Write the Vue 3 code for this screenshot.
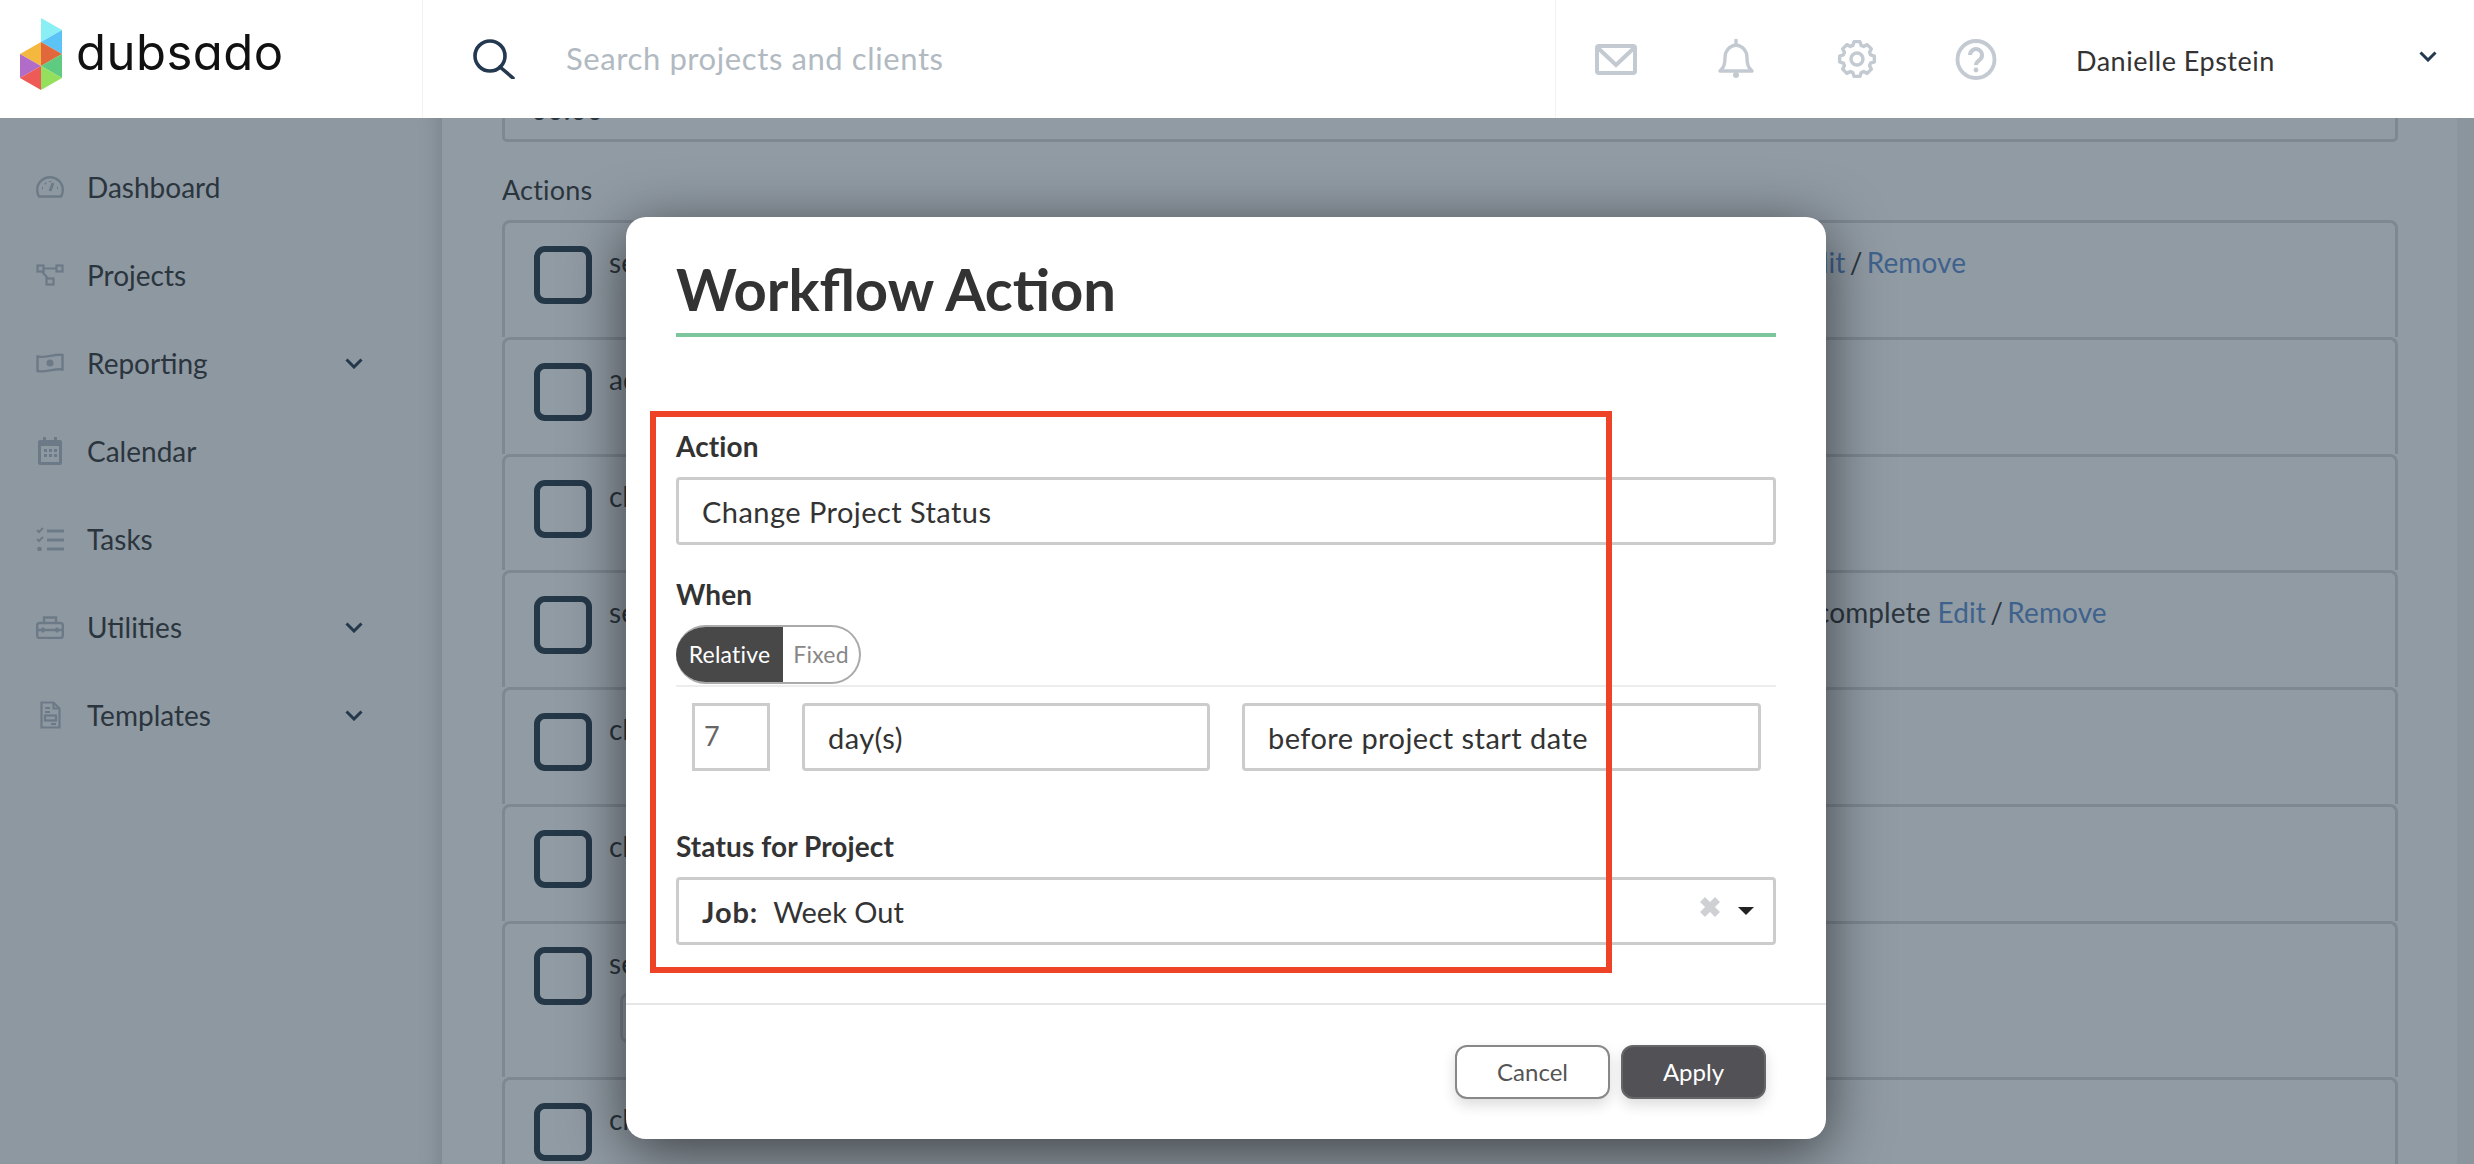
<script setup>
const nav = [
  { label: 'Dashboard', icon: 'gauge' },
  { label: 'Projects', icon: 'nodes' },
  { label: 'Reporting', icon: 'money', more: true },
  { label: 'Calendar', icon: 'cal' },
  { label: 'Tasks', icon: 'tasks' },
  { label: 'Utilities', icon: 'tool', more: true },
  { label: 'Templates', icon: 'doc', more: true }
]
const rows = [
  { text: 'send email', kind: 'links-a' },
  { text: 'add tag' },
  { text: 'change status' },
  { text: 'send task', kind: 'links-b', tail: 'complete' },
  { text: 'change status' },
  { text: 'change status' },
  { text: 'send form', tall: true },
  { text: 'change status' }
]
function gearPath() {
  const teeth = 8, cx = 20, cy = 20
  let d = ''
  for (let i = 0; i < teeth; i++) {
    const a = (i / teeth) * Math.PI * 2
    const pts = [[14.2, -0.3], [17.6, -0.17], [17.6, 0.17], [14.2, 0.3]]
    for (const [r, o] of pts) {
      const x = cx + r * Math.cos(a + o)
      const y = cy + r * Math.sin(a + o)
      d += (d ? 'L' : 'M') + x.toFixed(2) + ' ' + y.toFixed(2)
    }
  }
  return d + 'Z'
}
const gear = gearPath()
</script>

<template>
  <div class="app">
    <header class="top">
      <div class="brand">
        <svg class="logo" width="44" height="74" viewBox="20 17 44 74">
          <polygon points="41,18 62,30 41,42" fill="#8aeff4" />
          <polygon points="62,30 62,54 41,42" fill="#5cc3f7" />
          <polygon points="20,54 41,42 41,66" fill="#f5b83f" />
          <polygon points="41,42 62,54 41,66" fill="#e0683a" />
          <polygon points="20,54 41,66 20,78" fill="#b06cc6" />
          <polygon points="62,54 62,78 41,66" fill="#5fcb80" />
          <polygon points="20,78 41,66 41,90" fill="#ee5a55" />
          <polygon points="41,66 62,78 41,90" fill="#94df5b" />
        </svg>
        <span class="wordmark">dubsado</span>
      </div>
      <div class="search">
        <svg width="42" height="40" viewBox="0 0 42 40" fill="none" stroke="#24384f" stroke-width="3.6">
          <circle cx="17" cy="17" r="15" />
          <path d="M27 28l13 11" stroke-linecap="round" />
        </svg>
        <span class="placeholder">Search projects and clients</span>
      </div>
      <div class="tools">
        <svg class="tool mail" width="42" height="31" viewBox="0 0 42 31" fill="none" stroke="#c3cad1" stroke-width="4">
          <rect x="2" y="2" width="38" height="27" rx="2" />
          <path d="M3 4l18 17L39 4" />
        </svg>
        <svg class="tool bell" width="38" height="40" viewBox="0 0 38 40" fill="none" stroke="#c3cad1" stroke-width="3.4">
          <path d="M3 32c3-3 5-5 5-13 0-7 4-12 11-13 7 1 11 6 11 13 0 8 2 10 5 13z" stroke-linejoin="round" />
          <path d="M19 1v5" stroke-linecap="round" />
          <circle cx="19" cy="36" r="3" fill="#c3cad1" stroke="none" />
        </svg>
        <svg class="tool gear" width="40" height="40" viewBox="0 0 40 40" fill="none" stroke="#c3cad1" stroke-width="3.4">
          <path :d="gear" stroke-linejoin="round" />
          <circle cx="20" cy="20" r="6" />
        </svg>
        <svg class="tool help" width="42" height="41" viewBox="0 0 42 41" fill="none" stroke="#c3cad1" stroke-width="3.8">
          <circle cx="21" cy="20.5" r="18.5" />
          <path d="M15 16a6 6 0 1 1 9.5 5c-2 1.4-3.5 2.4-3.5 5" stroke-width="4" />
          <circle cx="21" cy="31" r="2.4" fill="#c3cad1" stroke="none" />
        </svg>
        <span class="user">Danielle Epstein</span>
        <svg class="caret" width="18" height="11" viewBox="0 0 18 11" fill="none" stroke="#24384f" stroke-width="3">
          <path d="M1.5 1.5L9 9l7.5-7.5" />
        </svg>
      </div>
    </header>

    <div class="page">
      <aside class="side">
        <div v-for="item in nav" :key="item.label" class="nav-item">
          <span class="nav-icon">
            <svg v-if="item.icon === 'gauge'" width="28" height="22" viewBox="0 0 28 22" fill="none" stroke="#b5bdc5" stroke-width="2.4">
              <path d="M3 20.5C1.6 18.5 1.2 16 1.2 14a12.8 12.8 0 0 1 25.6 0c0 2-.4 4.500-1.800 6.500z" />
              <path d="M14 15l3-8" stroke-width="3" />
              <path d="M6 12h1M9 7l1 1M14 5v1M21 12h1" />
            </svg>
            <svg v-else-if="item.icon === 'nodes'" width="28" height="22" viewBox="0 0 28 22" fill="none" stroke="#b5bdc5" stroke-width="2.2">
              <rect x="1.500" y="1.500" width="6" height="6" />
              <rect x="20.500" y="1.500" width="6" height="6" />
              <rect x="10.500" y="14.500" width="7" height="6" />
              <path d="M7.500 4.500h13M6 7.500l6 7" />
            </svg>
            <svg v-else-if="item.icon === 'money'" width="28" height="20" viewBox="0 0 28 20" fill="none" stroke="#b5bdc5" stroke-width="2.4">
              <path d="M1.500 3.500c8 2 17-3 25-1.500v14.500c-8-1.500-17 3.500-25 1.500z" />
              <circle cx="14" cy="10" r="3.600" fill="#b5bdc5" stroke="none" />
            </svg>
            <svg v-else-if="item.icon === 'cal'" width="24" height="28" viewBox="0 0 24 28" fill="#b5bdc5">
              <path d="M5 0h3v3h8V0h3v3h3a2 2 0 0 1 2 2v21a2 2 0 0 1-2 2H2a2 2 0 0 1-2-2V5a2 2 0 0 1 2-2h3zM3 9v16h18V9z" />
              <rect x="6" y="12" width="3" height="3" /><rect x="11" y="12" width="3" height="3" /><rect x="16" y="12" width="3" height="3" />
              <rect x="6" y="17" width="3" height="3" /><rect x="11" y="17" width="3" height="3" /><rect x="16" y="17" width="3" height="3" />
            </svg>
            <svg v-else-if="item.icon === 'tasks'" width="28" height="24" viewBox="0 0 28 24" fill="none" stroke="#b5bdc5" stroke-width="3">
              <path d="M11 4h17M11 13h17M11 22h17" />
              <path d="M1 3l2 2 4-4M1 12l2 2 4-4" stroke-width="2" />
              <circle cx="3.500" cy="22" r="2.300" fill="#b5bdc5" stroke="none" />
            </svg>
            <svg v-else-if="item.icon === 'tool'" width="28" height="24" viewBox="0 0 28 24" fill="none" stroke="#b5bdc5" stroke-width="2.4">
              <rect x="1.200" y="8" width="25.600" height="15" rx="2.500" />
              <path d="M8 8V2.500h12V8M1.200 15h25.600" />
              <path d="M7 12.500v5M21 12.500v5" stroke-width="3" />
            </svg>
            <svg v-else width="21" height="28" viewBox="0 0 21 28" fill="none" stroke="#b5bdc5" stroke-width="2.200">
              <path d="M1.500 1.500h12l6 6v19h-18z" />
              <path d="M13.500 1.500v6h6M5 7h5M5 11h5" />
              <rect x="5" y="14.500" width="11" height="5" />
              <path d="M11 23h5" />
            </svg>
          </span>
          <span class="nav-label">{{ item.label }}</span>
          <svg v-if="item.more" class="nav-more" width="18" height="11" viewBox="0 0 18 11" fill="none" stroke="#24384f" stroke-width="3">
            <path d="M1.500 1.500L9 9l7.500-7.500" />
          </svg>
        </div>
      </aside>

      <main class="main">
        <div class="time-box">00:00</div>
        <div class="actions-title">Actions</div>
        <div
          v-for="(row, i) in rows"
          :key="i"
          class="card"
          :class="{ tall: row.tall }"
        >
          <span class="check"></span>
          <div class="card-body">
            <div class="card-line">
              <span class="lead" :class="row.kind">{{ row.text }}</span>
              <span v-if="row.tail" class="tail">{{ row.tail }}</span>
              <span v-if="row.kind" class="links"><a>Edit</a> / <a>Remove</a></span>
            </div>
            <div v-if="row.tall" class="note"></div>
          </div>
        </div>
      </main>
      <div class="scroll-track"></div>
    </div>

    <div class="overlay"></div>

    <section class="modal">
      <h1 class="title">Workflow Action</h1>
      <div class="form">
        <label class="field-label first">Action</label>
        <div class="control">Change Project Status</div>

        <label class="field-label when">When</label>
        <div class="switch">
          <span class="on">Relative</span>
          <span class="off">Fixed</span>
        </div>
        <div class="timing">
          <div class="num">7</div>
          <div class="control">day(s)</div>
          <div class="control">before project start date</div>
        </div>

        <label class="field-label status">Status for Project</label>
        <div class="control select">
          <b>Job:</b>
          <span class="val">Week Out</span>
          <svg class="clear" width="22" height="22" viewBox="0 0 22 22" stroke="#cfd0d4" stroke-width="7">
            <path d="M3.500 3.500l15 15M18.500 3.500l-15 15" />
          </svg>
          <span class="arrow"></span>
        </div>
      </div>
      <footer class="foot">
        <button class="btn cancel">Cancel</button>
        <button class="btn apply">Apply</button>
      </footer>
      <div class="annotation"></div>
    </section>
  </div>
</template>

<style scoped>
.app {
  position: relative;
  width: 2474px;
  height: 1164px;
  overflow: hidden;
  background: #fff;
  font-family: Lato, "Noto Sans", sans-serif;
  color: #333;
}
.top {
  position: relative;
  z-index: 10;
  display: flex;
  height: 118px;
  background: #fff;
}
.brand {
  width: 423px;
  flex: none;
  display: flex;
  align-items: flex-start;
  border-right: 1px solid #f2f2f2;
  box-sizing: border-box;
  padding: 17px 0 0 20px;
}
.wordmark {
  margin: 8px 0 0 12px;
  font-family: Inter, sans-serif;
  font-feature-settings: "cv11";
  font-size: 49px;
  letter-spacing: 0.5px;
  line-height: 56px;
  color: #111;
}
.search {
  flex: 1;
  display: flex;
  align-items: center;
  padding: 0 0 0 50px;
}
.placeholder {
  margin-left: 51px;
  margin-top: -2px;
  font-size: 31px;
  letter-spacing: 0.6px;
  color: #b1b9c1;
}
.tools {
  width: 919px;
  flex: none;
  box-sizing: border-box;
  border-left: 1px solid #f2f2f2;
  display: flex;
  align-items: center;
  position: relative;
  padding-left: 39px;
}
.tool { flex: none; }
.bell { margin-left: 80px; }
.gear { margin-left: 82px; }
.help { margin-left: 78px; }
.user {
  margin-left: 79px;
  margin-top: 2px;
  font-size: 27px;
  letter-spacing: 0.5px;
  color: #333;
}
.caret { margin-left: auto; margin-right: 37px; margin-top: -6px; }

.page {
  display: flex;
  height: 1046px;
}
.side {
  width: 442px;
  flex: none;
  box-sizing: border-box;
  padding: 25px 79px 0 36px;
  background: #f8f8f8;
  box-shadow: inset -24px 0 22px -22px rgba(0, 0, 0, 0.18);
}
.nav-item {
  height: 88px;
  display: flex;
  align-items: center;
  color: #333;
}
.nav-icon {
  width: 28px;
  margin-right: 23px;
  display: flex;
  justify-content: center;
}
.nav-label { font-size: 28px; }
.nav-more { margin-left: auto; }

.main {
  flex: 1;
  min-width: 0;
  padding: 0 59px 0 60px;
  overflow: hidden;
}
.time-box {
  margin-top: -46px;
  height: 70px;
  box-sizing: border-box;
  border: 3px solid #d8d8d8;
  border-radius: 5px;
  padding: 17px 26px 0;
  font-size: 28px;
  line-height: 34px;
}
.actions-title {
  margin-top: 30px;
  height: 48px;
  font-size: 27px;
  letter-spacing: 0.2px;
  line-height: 36px;
}
.card {
  display: flex;
  box-sizing: border-box;
  height: 116.8px;
  border: 3px solid #d8d8d8;
  border-bottom-width: 0;
  border-radius: 8px 8px 0 0;
  padding: 23px 0 0 29px;
}
.card.tall { height: 156.5px; }
.check {
  width: 58px;
  height: 58px;
  flex: none;
  box-sizing: border-box;
  border: 6px solid #263847;
  border-radius: 11px;
}
.card-body {
  margin-left: 17px;
  flex: 1;
  min-width: 0;
}
.card-line {
  display: flex;
  font-size: 28px;
  letter-spacing: 0.1px;
  line-height: 32px;
  white-space: nowrap;
}
.lead { width: 1200px; }
.lead.links-a { width: 1188px; }
.lead.links-b { width: 1207px; }
.tail { margin-right: 7px; }
.links { white-space: pre; word-spacing: -3px; }
.links a { color: #5b8dcf; }
.note {
  margin: 14px 0 0 11px;
  width: 300px;
  height: 50px;
  box-sizing: border-box;
  border: 3px solid #d8d8d8;
  border-radius: 8px;
}
.scroll-track {
  width: 17px;
  flex: none;
  background: #f2f2f2;
}
.overlay {
  position: absolute;
  inset: 118px 0 0 0;
  z-index: 5;
  background: rgba(36, 56, 74, 0.5);
}

.modal {
  position: absolute;
  left: 626px;
  top: 217px;
  width: 1200px;
  height: 922px;
  z-index: 20;
  background: #fff;
  border-radius: 20px;
  box-shadow: 0 12px 60px rgba(0, 0, 0, 0.6);
}
.title {
  margin: 0 50px 0 50px;
  padding: 39px 0 11px;
  border-bottom: 4px solid #7cc69d;
  font-size: 58px;
  line-height: 66px;
  font-weight: 700;
  color: #333;
}
.form { padding: 0 50px; }
.field-label {
  display: block;
  font-size: 28px;
  letter-spacing: 0.1px;
  line-height: 32px;
  font-weight: 700;
  margin-bottom: 15px;
  color: #333;
}
.field-label.first { margin-top: 93px; }
.field-label.when { margin-top: 33px; }
.field-label.status { margin-top: 59px; }
.control {
  box-sizing: border-box;
  height: 68px;
  border: 3px solid #ccc;
  border-radius: 4px;
  padding: 0 23px;
  display: flex;
  align-items: center;
  font-size: 29px;
  letter-spacing: 0.45px;
  color: #333;
}
.switch {
  display: flex;
  width: 185px;
  height: 59px;
  box-sizing: border-box;
  border: 2px solid #aaa;
  border-left-width: 0;
  border-radius: 30px;
  overflow: hidden;
  font-size: 23px;
  letter-spacing: 0.2px;
  line-height: 55px;
}
.on {
  width: 107px;
  margin-top: -2px;
  height: 59px;
  text-align: center;
  background: #484848;
  color: #fff;
  line-height: 59px;
}
.off {
  flex: 1;
  text-align: center;
  color: #888;
}
.timing {
  margin-top: 1px;
  border-top: 2px solid #efeced;
  padding: 16px 15px 0 16px;
  display: grid;
  grid-template-columns: 78px 408px 1fr;
  column-gap: 32px;
}
.num {
  box-sizing: border-box;
  height: 68px;
  border: 3px solid #ccc;
  padding: 0 9px;
  font-size: 27px;
  line-height: 60px;
  color: #666;
}
.select b { margin-right: 15px; font-weight: 700; letter-spacing: 0.9px; }
.val { letter-spacing: 0; }
.clear { margin-left: auto; margin-right: 17px; margin-top: -8px; }
.arrow {
  width: 0;
  height: 0;
  margin-right: -4px;
  border-left: 8px solid transparent;
  border-right: 8px solid transparent;
  border-top: 8px solid #222;
}
.foot {
  margin-top: 58px;
  border-top: 2px solid #e6e6e6;
  padding: 40px 60px 0 0;
  display: flex;
  justify-content: flex-end;
  gap: 11px;
}
.btn {
  height: 54px;
  box-sizing: border-box;
  padding: 0 0 2px;
  border-radius: 12px;
  font-family: Lato, "Noto Sans", sans-serif;
  font-size: 24px;
  box-shadow: 0 6px 14px rgba(0, 0, 0, 0.14);
}
.cancel {
  width: 155px;
  background: #fff;
  border: 2px solid #888;
  color: #555;
}
.apply {
  width: 145px;
  background: #525156;
  border: 2px solid #66666a;
  color: #fff;
}
.annotation {
  position: absolute;
  left: 24px;
  top: 194px;
  width: 962px;
  height: 562px;
  box-sizing: border-box;
  border: 6px solid #ee4326;
  pointer-events: none;
}
</style>
